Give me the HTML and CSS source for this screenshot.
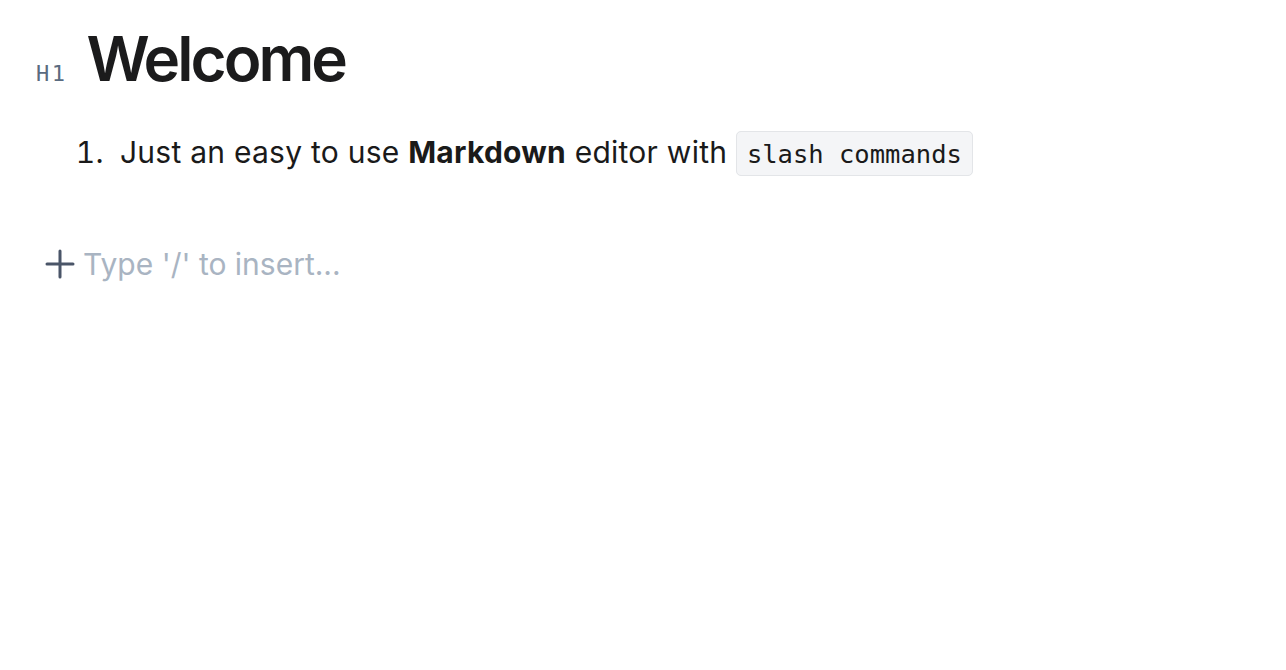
FILE: index.html
```html
<!DOCTYPE html>
<html>
<head>
<meta charset="utf-8">
<link rel="stylesheet" href="styles.css">
</head>
<body>
<div class="editor">
  <div class="block heading-block">
    <span class="tag">H1</span>
    <h1 class="title">Welcome</h1>
  </div>
  <ol class="list">
    <li>Just an easy to use <strong>Markdown</strong> editor with <code>slash commands</code></li>
  </ol>
  <div class="block insert">
    <svg class="plus" width="30" height="30" viewBox="0 0 30 30"><path d="M15 2v26M2 15h26" stroke="#4a5568" stroke-width="3" stroke-linecap="round" fill="none"/></svg>
    <span class="placeholder">Type '/' to insert...</span>
  </div>
</div>
</body>
</html>
```

FILE: styles.css
```css
html, body {
  margin: 0;
  padding: 0;
  background: #ffffff;
}
body {
  font-family: Inter, "Noto Sans", sans-serif;
  color: #1a1a1a;
}
.editor {
  padding: 20px 36px;
}
.block {
  display: flex;
  align-items: baseline;
}
.heading-block {
  gap: 19px;
}
.tag {
  font-family: "DejaVu Sans Mono", monospace;
  font-size: 22px;
  color: #5a6b80;
  letter-spacing: 2.5px;
}
.title {
  margin: 0;
  font-size: 62px;
  font-weight: 600;
  line-height: 1.25;
  letter-spacing: -3px;
  color: #1b1b1c;
}
.list {
  margin: 32px 0 0 0;
  padding-left: 76px;
  font-size: 30px;
  letter-spacing: 0.25px;
  line-height: 1.5;
}
.list li {
  padding-left: 8px;
}
.list strong {
  font-weight: 700;
}
code {
  font-family: "DejaVu Sans Mono", monospace;
  font-size: 25.5px;
  letter-spacing: 0;
  background: #f4f5f7;
  border: 1px solid #e3e5e8;
  border-radius: 5px;
  padding: 7px 10px 6px;
}
.insert {
  margin-top: 71px;
  align-items: center;
  gap: 8px;
  padding-left: 9px;
}
.placeholder {
  font-size: 30px;
  letter-spacing: 0;
  color: #a9b4c2;
}
```
